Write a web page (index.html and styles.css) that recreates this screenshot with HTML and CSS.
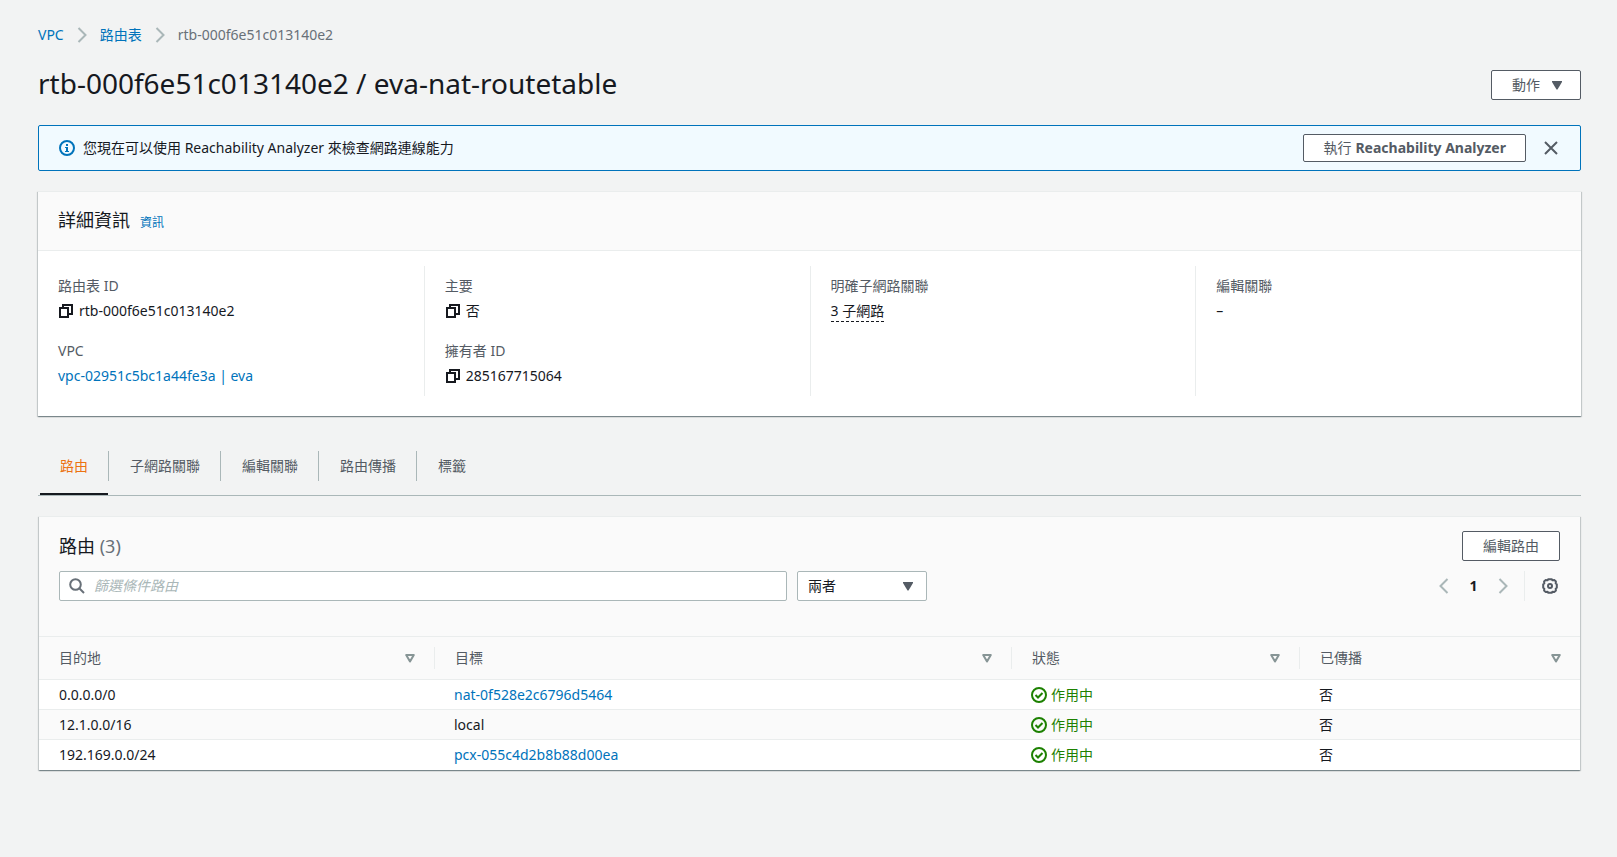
FILE: index.html
```html
<!DOCTYPE html>
<html lang="zh-Hant">
<head>
<meta charset="utf-8">
<title>rtb-000f6e51c013140e2 / eva-nat-routetable</title>
<link rel="stylesheet" href="styles.css">
</head>
<body>
<svg class="sprite" aria-hidden="true">
  <symbol id="chevron" viewBox="0 0 10 16"><path d="M1.5 1 8.5 8 1.5 15" fill="none" stroke="currentColor" stroke-width="2"/></symbol>
  <symbol id="caret" viewBox="0 0 10 9"><path d="M0 0H10V1L5.5 8.5H4.500L0 1Z" fill="currentColor"/></symbol>
  <symbol id="sort" viewBox="0 0 10 9"><path d="M1.200 1H8.800L5 7.500Z" fill="none" stroke="currentColor" stroke-width="2" stroke-linejoin="round"/></symbol>
  <symbol id="copy" viewBox="-1 -1 16 16"><path d="M1 4H9V13H1Z M4 4V1H13V10H9" fill="none" stroke="currentColor" stroke-width="2"/></symbol>
  <symbol id="check" viewBox="0 0 16 16"><circle cx="8" cy="8" r="7" fill="none" stroke="currentColor" stroke-width="2"/><path d="M4.500 8 7 10.500 11.500 6" fill="none" stroke="currentColor" stroke-width="2"/></symbol>
</svg>
<main class="page">
  <nav class="breadcrumbs" aria-label="導覽路徑">
    <a href="#">VPC</a>
    <svg class="chevron"><use href="#chevron"/></svg>
    <a href="#">路由表</a>
    <svg class="chevron"><use href="#chevron"/></svg>
    <span>rtb-000f6e51c013140e2</span>
  </nav>

  <header class="page-header">
    <h1>rtb-000f6e51c013140e2 / eva-nat-routetable</h1>
    <button class="button actions" type="button">動作 <svg class="caret"><use href="#caret"/></svg></button>
  </header>

  <section class="banner">
    <svg class="icon info-icon" viewBox="0 0 16 16"><circle cx="8" cy="8" r="7" fill="none" stroke="currentColor" stroke-width="2"/><path d="M7 4H9V6H7ZM6 7H9V11H10V12H6V11H7V8H6Z" fill="currentColor"/></svg>
    <p>您現在可以使用 Reachability Analyzer 來檢查網路連線能力</p>
    <button class="button button-small" type="button">執行 <b>Reachability Analyzer</b></button>
    <button class="icon-button" type="button" aria-label="關閉"><svg class="close" viewBox="0 0 14 14"><path d="M1 1 13 13M13 1 1 13" fill="none" stroke="currentColor" stroke-width="2"/></svg></button>
  </section>

  <section class="panel details">
    <header class="details-header"><h2>詳細資訊</h2><a href="#">資訊</a></header>
    <div class="details-grid">
      <dl>
        <dt>路由表 ID</dt>
        <dd><svg class="copy"><use href="#copy"/></svg>rtb-000f6e51c013140e2</dd>
        <dt>VPC</dt>
        <dd><a href="#">vpc-02951c5bc1a44fe3a | eva</a></dd>
      </dl>
      <dl>
        <dt>主要</dt>
        <dd><svg class="copy"><use href="#copy"/></svg>否</dd>
        <dt>擁有者 ID</dt>
        <dd><svg class="copy"><use href="#copy"/></svg>285167715064</dd>
      </dl>
      <dl>
        <dt>明確子網路關聯</dt>
        <dd><span class="popover-trigger">3 子網路</span></dd>
      </dl>
      <dl>
        <dt>編輯關聯</dt>
        <dd>–</dd>
      </dl>
    </div>
  </section>

  <nav class="tabs">
    <a class="tab tab-active" href="#"><span>路由</span></a>
    <a class="tab" href="#"><span>子網路關聯</span></a>
    <a class="tab" href="#"><span>編輯關聯</span></a>
    <a class="tab" href="#"><span>路由傳播</span></a>
    <a class="tab" href="#"><span>標籤</span></a>
  </nav>

  <section class="panel routes">
    <header class="routes-header">
      <h2>路由 <span class="count">(3)</span></h2>
      <button class="button" type="button">編輯路由</button>
    </header>
    <div class="toolbar">
      <label class="search">
        <svg class="icon" viewBox="0 0 16 16"><circle cx="6.500" cy="6.500" r="5.300" fill="none" stroke="currentColor" stroke-width="2"/><path d="M10.500 10.500 15 15" stroke="currentColor" stroke-width="2"/></svg>
        <input type="text" placeholder="篩選條件路由" aria-label="篩選條件路由">
      </label>
      <div class="select">
        <select aria-label="篩選"><option>兩者</option></select>
        <svg class="caret"><use href="#caret"/></svg>
      </div>
      <div class="pagination">
        <button class="icon-button pager" type="button" aria-label="上一頁"><svg class="chevron chevron-left"><use href="#chevron"/></svg></button>
        <button class="icon-button page-number" type="button">1</button>
        <button class="icon-button pager" type="button" aria-label="下一頁"><svg class="chevron"><use href="#chevron"/></svg></button>
      </div>
      <button class="icon-button settings" type="button" aria-label="設定"><svg class="icon" viewBox="0 0 16 16" fill="none" stroke="currentColor" stroke-width="2"><path d="M6.300 1.200H9.700L10.500 2.300 12.500 2.100 13.900 3.500 13.700 5.500 14.800 6.300V9.700L13.700 10.500 13.900 12.500 12.500 13.900 10.500 13.700 9.700 14.800H6.300L5.500 13.700 3.500 13.900 2.100 12.500 2.300 10.500 1.200 9.700V6.300L2.300 5.500 2.100 3.500 3.500 2.100 5.500 2.300Z" stroke-linejoin="round"/><circle cx="8" cy="8" r="2"/></svg></button>
    </div>
    <table>
      <colgroup><col class="col-destination"><col class="col-target"><col class="col-status"><col class="col-propagated"></colgroup>
      <thead>
        <tr>
          <th scope="col"><div>目的地 <svg class="sort"><use href="#sort"/></svg></div></th>
          <th scope="col"><div>目標 <svg class="sort"><use href="#sort"/></svg></div></th>
          <th scope="col"><div>狀態 <svg class="sort"><use href="#sort"/></svg></div></th>
          <th scope="col"><div>已傳播 <svg class="sort"><use href="#sort"/></svg></div></th>
        </tr>
      </thead>
      <tbody>
        <tr><td>0.0.0.0/0</td><td><a href="#">nat-0f528e2c6796d5464</a></td><td><span class="status"><svg class="icon"><use href="#check"/></svg>作用中</span></td><td>否</td></tr>
        <tr><td>12.1.0.0/16</td><td>local</td><td><span class="status"><svg class="icon"><use href="#check"/></svg>作用中</span></td><td>否</td></tr>
        <tr><td>192.169.0.0/24</td><td><a href="#">pcx-055c4d2b8b88d00ea</a></td><td><span class="status"><svg class="icon"><use href="#check"/></svg>作用中</span></td><td>否</td></tr>
      </tbody>
    </table>
  </section>
</main>
</body>
</html>
```

FILE: styles.css
```css
* { box-sizing: border-box; }

body {
  margin: 0;
  background: #f2f3f3;
  color: #16191f;
  font: 14px/20px "Noto Sans", "Noto Sans CJK TC", sans-serif;
}

h1, h2, p, dl, dd { margin: 0; font-weight: 400; }
a { color: #0073bb; text-decoration: none; }
button, input, select { font: inherit; color: inherit; }
svg { display: block; flex: none; }

.sprite { position: absolute; width: 0; height: 0; }
.icon { width: 16px; height: 16px; }
.chevron { width: 10px; height: 16px; color: #aab7b8; }
.chevron-left { transform: rotate(180deg); }
.caret { width: 10px; height: 9px; color: #545b64; }
.sort { width: 10px; height: 9px; color: #879596; }
.copy { width: 16px; height: 16px; }
.close { width: 14px; height: 14px; }

.page { padding: 25px 36px 40px 38px; }

.breadcrumbs {
  display: flex;
  align-items: center;
  gap: 13px;
  color: #687078;
}

.page-header {
  display: flex;
  align-items: center;
  justify-content: space-between;
  margin: 20px 0;
}
.page-header h1 { font-size: 28px; line-height: 36px; padding-bottom: 4px; }

.button {
  display: flex;
  align-items: center;
  height: 30px;
  padding: 0 20px;
  border: 1px solid #545b64;
  border-radius: 2px;
  background: #fff;
  color: #545b64;
}
.actions { gap: 12px; padding-right: 18px; }
.button-small { height: 28px; gap: 4px; padding: 0 19px; }
.button b { font-weight: 700; }

.icon-button {
  display: flex;
  align-items: center;
  justify-content: center;
  padding: 0;
  border: 0;
  background: none;
  color: #545b64;
}

.banner {
  display: flex;
  align-items: center;
  height: 46px;
  padding: 0 22px 0 20px;
  border: 1px solid #0073bb;
  border-radius: 2px;
  background: #f1faff;
}
.info-icon { color: #0073bb; margin-right: 8px; }
.banner p { flex: 1; }
.banner .icon-button { margin-left: 18px; }

.panel {
  background: #fff;
  border-top: 1px solid #eaeded;
  box-shadow: 0 1px 1px 0 rgba(0, 28, 36, .3), 1px 1px 1px 0 rgba(0, 28, 36, .15), -1px 1px 1px 0 rgba(0, 28, 36, .15);
}
.panel h2 { font-size: 18px; line-height: 22px; }

.details { margin-top: 20px; }
.details-header {
  display: flex;
  align-items: baseline;
  gap: 10px;
  padding: 17px 20px;
  border-bottom: 1px solid #eaeded;
  background: #fafafa;
}
.details-header a { font-size: 12px; }
.details-grid {
  display: grid;
  grid-template-columns: repeat(4, 1fr);
  padding: 15px 0 20px;
}
.details-grid dl { padding: 10px 20px 0; min-height: 130px; }
.details-grid dl + dl { border-left: 1px solid #eaeded; }
.details-grid dt { color: #545b64; }
.details-grid dd {
  display: flex;
  align-items: center;
  gap: 5px;
  margin: 5px 0 20px;
}
.details-grid dd:last-child { margin-bottom: 0; }
.popover-trigger { border-bottom: 1px dashed #16191f; }

.tabs {
  display: flex;
  margin-top: 25px;
  border-bottom: 1px solid #aab7b8;
  padding-left: 2px;
}
.tab {
  padding: 10px 0 12px;
  border-bottom: 2px solid transparent;
  color: #545b64;
}
.tab span {
  display: block;
  padding: 5px 20px 5px 21px;
}
.tab + .tab span { border-left: 1px solid #aab7b8; }
.tab-active { border-bottom-color: #16191f; color: #ec7211; }
.tab-active span { padding-left: 20px; }

.routes {
  margin: 20px 1px 0;
  background: #fafafa;
}
.routes-header {
  display: flex;
  justify-content: space-between;
  align-items: center;
  padding: 14px 20px 10px;
}
.count { color: #687078; }

.toolbar {
  display: flex;
  align-items: center;
  padding: 0 12px 35px 20px;
}
.search {
  display: flex;
  align-items: center;
  gap: 9px;
  flex: 0 1 728px;
  height: 30px;
  padding: 0 9px;
  border: 1px solid #aab7b8;
  border-radius: 2px;
  background: #fff;
  color: #687078;
}
.search input {
  flex: 1;
  min-width: 0;
  padding: 0;
  border: 0;
  background: none;
  outline: 0;
}
.search input::placeholder { color: #aab7b8; font-style: italic; opacity: 1; }

.select {
  display: grid;
  align-items: center;
  width: 130px;
  margin-left: 10px;
}
.select > * { grid-area: 1 / 1; }
.select select {
  appearance: none;
  width: 100%;
  height: 30px;
  padding: 0 10px;
  border: 1px solid #aab7b8;
  border-radius: 2px;
  background: #fff;
}
.select .caret { justify-self: end; margin-right: 14px; pointer-events: none; }

.pagination { display: flex; margin-left: auto; padding-right: 10px; }
.pager { width: 22px; height: 30px; }
.page-number { width: 37px; font-weight: 700; color: #16191f; }
.settings { width: 44px; height: 30px; border-left: 1px solid #eaeded; padding: 0 10px 0 17px; }

table {
  width: 100%;
  table-layout: fixed;
  border-collapse: separate;
  border-spacing: 0;
}
.col-destination { width: 395px; }
.col-target { width: 577px; }
.col-status { width: 288px; }
th {
  padding: 10px 0;
  border-top: 1px solid #eaeded;
  border-bottom: 1px solid #eaeded;
  color: #545b64;
  font-weight: 400;
  text-align: left;
}
th div {
  display: flex;
  align-items: center;
  justify-content: space-between;
  padding: 0 19px 0 20px;
  height: 22px;
}
th + th div { border-left: 1px solid #eaeded; }
td {
  height: 30px;
  padding: 0 20px;
  border-bottom: 1px solid #eaeded;
  background: #fff;
}
tr:nth-child(even) td { background: #fafafa; }
tr:last-child td { border-bottom: 0; }
.status { display: flex; align-items: center; gap: 4px; color: #1d8102; }
```
